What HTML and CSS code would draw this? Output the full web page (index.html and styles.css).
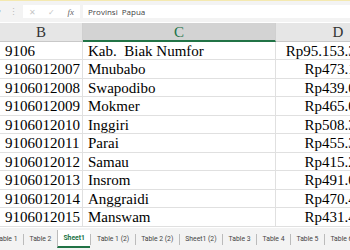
FILE: index.html
```html
<!DOCTYPE html>
<html lang="id">
<head>
  <meta charset="UTF-8">
  <title>Provinsi Papua</title>
  <link rel="stylesheet" href="styles.css">
</head>
<body>
  <div class="formula-bar">
    <span class="drop">&#9662;</span>
    <span class="grip">&#8942;</span>
    <div class="fx-box">
      <span class="fx-btn">&#10005;</span>
      <span class="fx-btn">&#10003;</span>
      <span class="fx-btn fx"><i>fx</i></span>
    </div>
    <div class="formula-input">Provinsi&nbsp; Papua</div>
  </div>

  <div class="sheet">
    <div class="col-head">B</div>
    <div class="col-head active">C</div>
    <div class="col-head">D</div>

    <div class="cell">9106</div><div class="cell">Kab.&nbsp; Biak Numfor</div><div class="cell num">Rp95.153.312.000</div>
    <div class="cell">9106012007</div><div class="cell">Mnubabo</div><div class="cell num">Rp473.120.000</div>
    <div class="cell">9106012008</div><div class="cell">Swapodibo</div><div class="cell num">Rp439.050.000</div>
    <div class="cell">9106012009</div><div class="cell">Mokmer</div><div class="cell num">Rp465.080.000</div>
    <div class="cell">9106012010</div><div class="cell">Inggiri</div><div class="cell num">Rp508.310.000</div>
    <div class="cell">9106012011</div><div class="cell">Parai</div><div class="cell num">Rp455.370.000</div>
    <div class="cell">9106012012</div><div class="cell">Samau</div><div class="cell num">Rp415.240.000</div>
    <div class="cell">9106012013</div><div class="cell">Insrom</div><div class="cell num">Rp491.030.000</div>
    <div class="cell">9106012014</div><div class="cell">Anggraidi</div><div class="cell num">Rp470.460.000</div>
    <div class="cell">9106012015</div><div class="cell">Manswam</div><div class="cell num">Rp431.420.000</div>
  </div>

  <div class="tabs">
    <span class="tab">Table 1</span>
    <span class="tab">Table 2</span>
    <span class="tab active">Sheet1</span>
    <span class="tab">Table 1 (2)</span>
    <span class="tab">Table 2 (2)</span>
    <span class="tab">Sheet1 (2)</span>
    <span class="tab">Table 3</span>
    <span class="tab">Table 4</span>
    <span class="tab">Table 5</span>
    <span class="tab">Table 6</span>
  </div>
</body>
</html>
```

FILE: styles.css
```css
body {
  margin: 0;
  width: 350px;
  height: 250px;
  overflow: hidden;
  background-color: #fff;
  font-family: "Liberation Serif", serif;
}

/* Formula bar */
.formula-bar {
  display: flex;
  align-items: center;
  height: 22px;
  box-sizing: border-box;
  border-top: 1px solid #f4e9b0;
  background-color: #f3f3f3;
  font-family: "Open Sans", sans-serif;
  color: #555;
}

.drop {
  width: 6px;
  font-size: 7px;
  margin-left: -3px;
  color: #666;
}

.grip {
  width: 12px;
  margin-left: 6px;
  font-size: 9px;
  color: #bbb;
}

.fx-box {
  display: flex;
  align-items: center;
  justify-content: space-around;
  width: 57px;
  height: 13px;
  background-color: #fff;
  margin-left: 2px;
}

.fx-btn {
  font-size: 8px;
  color: #c6c6c6;
}

.fx-btn.fx {
  color: #666;
  font-family: "Liberation Serif", serif;
  font-size: 9px;
}

.formula-input {
  flex: 1;
  height: 13px;
  margin-left: 3px;
  padding-left: 5px;
  background-color: #fff;
  font-size: 8px;
  line-height: 13px;
  color: #444;
}

/* Grid */
.sheet {
  display: grid;
  grid-template-columns: 83px 193px 125px;
  grid-auto-rows: 18.5px;
  margin-top: 1px;
  width: 401px;
}

.col-head {
  height: 19px;
  background-color: #e6e6e6;
  border-right: 1px solid #d0d0d0;
  border-bottom: 1px solid #c8c8c8;
  text-align: center;
  font-size: 15px;
  line-height: 18px;
  color: #333;
  box-sizing: border-box;
}

.col-head.active {
  background-color: #d3d3d3;
  border-bottom: 2px solid #217346;
  color: #217346;
}

.cell {
  border-right: 1px solid #e0e0e0;
  border-bottom: 1px solid #e0e0e0;
  padding: 0 3px 0 5px;
  font-size: 15px;
  line-height: 18px;
  color: #000;
  white-space: nowrap;
  overflow: hidden;
  box-sizing: border-box;
}

.cell.num {
  text-align: right;
}

/* Sheet tabs */
.tabs {
  display: flex;
  align-items: center;
  height: 22px;
  box-sizing: border-box;
  padding-top: 1px;
  margin-left: -10px;
  margin-top: 1px;
  background-color: #f3f3f3;
  font-family: Roboto, sans-serif;
  font-size: 6.8px;
  color: #444;
  white-space: nowrap;
}

.tab {
  padding: 0 5.5px;
  line-height: 11px;
  border-left: 1px solid #bbb;
}

.tab:first-child {
  border-left: none;
}

.tab.active {
  background-color: #fff;
  color: #217346;
  font-weight: bold;
  line-height: 16px;
  border-bottom: 2px solid #217346;
}
```
